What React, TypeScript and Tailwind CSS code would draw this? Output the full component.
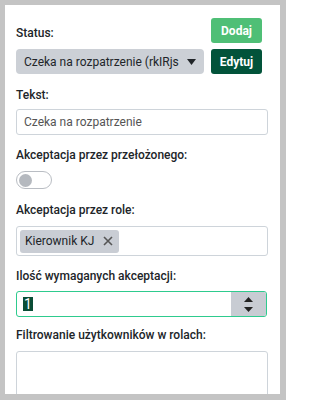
import React from "react";

export default function App() {
  const font = { fontFamily: "Roboto, 'Noto Sans', sans-serif" };
  const label = "shrink-0 text-[12px] leading-[16px] font-medium text-[#212529] whitespace-nowrap";
  return (
    <div className="w-[286px] h-[400px] bg-[#c4c4c4] pt-[5px] pl-[5px] pr-[6px] pb-[6px]" style={font}>
      <div className="w-full h-full bg-white overflow-hidden pl-[11px] pr-[12px] flex flex-col">
        <div className="shrink-0 mt-[13px] h-[25px] w-[246px] flex justify-between">
          <span className={"self-end mb-[2px] " + label}>Status:</span>
          <button className="w-[51px] h-[25px] rounded-[3px] bg-[#4fbf76] text-white text-[12px] font-bold">Dodaj</button>
        </div>
        <div className="shrink-0 mt-[6px] h-[25px] w-[246px] flex gap-[7px]">
          <div className="w-[188px] h-[25px] rounded-[4px] bg-[#ccd0d6] flex items-center pl-[8px] pr-[8px]">
            <span className="flex-1 overflow-hidden whitespace-nowrap text-[12px] text-[#212529] leading-[16px]">Czeka na rozpatrzenie (rkIRjs</span>
            <svg width="9" height="6" viewBox="0 0 9 6" className="ml-[6px] shrink-0"><path d="M0 0H9L4.5 6Z" fill="#212529" /></svg>
          </div>
          <button className="w-[51px] h-[25px] rounded-[3px] bg-[#02533a] text-white text-[12px] font-bold">Edytuj</button>
        </div>
        <span className={"mt-[13px] " + label}>Tekst:</span>
        <div className="shrink-0 mt-[6px] w-[252px] h-[26px] border border-[#ced4da] rounded-[3px] flex items-center pl-[7px] text-[12px] text-[#555]">Czeka na rozpatrzenie</div>
        <span className={"mt-[12px] " + label}>Akceptacja przez przełożonego:</span>
        <div className="shrink-0 mt-[8px] w-[36px] h-[18px] rounded-full border border-[#b9bdc3] flex items-center pl-[2px]">
          <div className="w-[13px] h-[13px] rounded-full bg-[#b5b9bf]" />
        </div>
        <span className={"mt-[13px] " + label}>Akceptacja przez role:</span>
        <div className="shrink-0 mt-[8px] w-[252px] h-[30px] border border-[#ced4da] rounded-[3px] flex items-center pl-[3px]">
          <div className="h-[23px] w-[99px] rounded-[3px] bg-[#c9cdd4] flex items-center pl-[5px] gap-[9px] text-[12px] text-[#212529] whitespace-nowrap">
            <span>Kierownik KJ</span>
            <svg width="10" height="10" viewBox="0 0 10 10"><path d="M1 1L9 9M9 1L1 9" stroke="#555" strokeWidth="1.6" /></svg>
          </div>
        </div>
        <span className={"mt-[12px] " + label}>Ilość wymaganych akceptacji:</span>
        <div className="shrink-0 mt-[7px] w-[251px] h-[26px] border border-[#2ecb8e] rounded-[3px] flex overflow-hidden">
          <div className="flex-1 flex items-center pl-[6px]">
            <span className="bg-[#0a4d36] text-white text-[14px] leading-[14px] px-[1px]">1</span>
          </div>
          <div className="w-[35px] h-full bg-[#c8ccd3] flex flex-col items-center justify-center gap-[5px]">
            <svg width="9" height="5" viewBox="0 0 9 5"><path d="M0 5H9L4.5 0Z" fill="#222" /></svg>
            <svg width="9" height="5" viewBox="0 0 9 5"><path d="M0 0H9L4.5 5Z" fill="#222" /></svg>
          </div>
        </div>
        <span className={"mt-[10px] " + label}>Filtrowanie użytkowników w rolach:</span>
        <div className="shrink-0 mt-[8px] w-[252px] h-[60px] border border-[#ced4da] rounded-[3px]" />
      </div>
    </div>
  );
}
